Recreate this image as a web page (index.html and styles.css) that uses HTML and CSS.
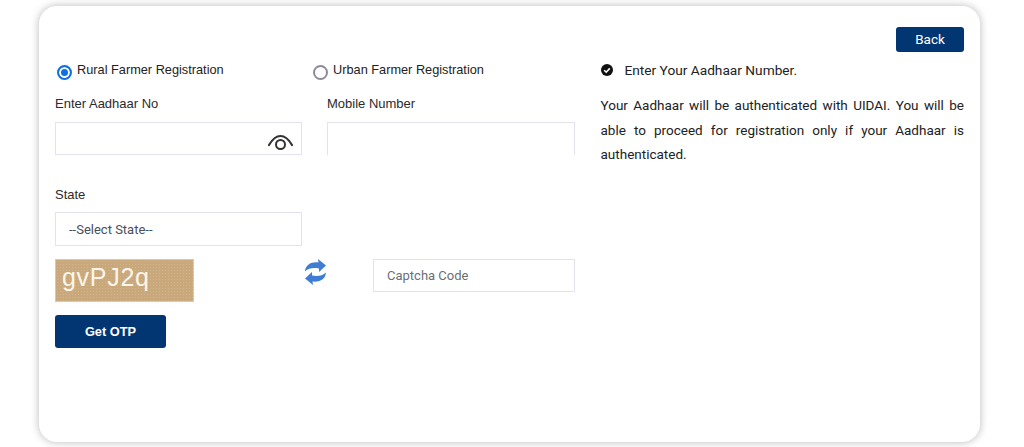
FILE: index.html
```html
<!DOCTYPE html>
<html>
<head>
	<title>Farmer Registration</title>
	<link rel="stylesheet" href="styles.css">
</head>
<body>
	<div class="card">
		<div class="top-bar">
			<a class="btn-back" href="#">Back</a>
		</div>
		<div class="columns">
			<form class="reg-form">
				<div class="radio-row">
					<label class="radio-item radio-rural">
						<span class="radio-dot radio-on"></span>
						<span class="radio-text">Rural Farmer Registration</span>
					</label>
					<label class="radio-item">
						<span class="radio-dot"></span>
						<span class="radio-text">Urban Farmer Registration</span>
					</label>
				</div>
				<div class="field-row">
					<div class="field field-aadhaar">
						<label class="field-label" for="aadhaar">Enter Aadhaar No</label>
						<div class="input-wrap">
							<input class="text-input" type="text" id="aadhaar">
							<svg class="eye-icon" width="26" height="20" viewBox="0 0 26 20">
								<path d="M1 14C4.500 8 8.500 5 12.500 5S20.500 8 24 14" fill="none" stroke="#333" stroke-width="2.200" stroke-linecap="round"/>
								<circle cx="12.500" cy="13.500" r="4.500" fill="none" stroke="#333" stroke-width="2"/>
							</svg>
						</div>
					</div>
					<div class="field field-mobile">
						<label class="field-label" for="mobile">Mobile Number</label>
						<input class="text-input no-bottom" type="text" id="mobile">
					</div>
				</div>
				<div class="field field-state">
					<label class="field-label" for="state">State</label>
					<select class="text-input state-select" id="state">
						<option>--Select State--</option>
					</select>
				</div>
				<div class="captcha-row">
					<div class="captcha-img">gvPJ2q</div>
					<svg class="refresh-icon" width="21" height="26" viewBox="0 0 21 26">
						<path fill="#3f7cd6" d="M0 12.500C0.500 6 6 2.600 13.500 3.500L13 0L21 6.500L14 13L14 9.500C9 8.500 3.500 9 0 12.500Z"/>
						<path fill="#3f7cd6" d="M21 13.500C20.500 20 15 23.400 7.500 22.500L8 26L0 19.500L7 13L7 16.500C12 17.500 17.500 17 21 13.500Z"/>
					</svg>
					<input class="text-input captcha-input" type="text" placeholder="Captcha Code">
				</div>
				<button class="btn-otp" type="button">Get OTP</button>
			</form>
			<div class="info">
				<div class="info-head">
					<svg class="check-icon" width="12" height="12" viewBox="0 0 12 12">
						<circle cx="6" cy="6" r="6" fill="#111"/>
						<path d="M3.200 6.200l2 2 3.600-3.800" fill="none" stroke="#fff" stroke-width="1.600"/>
					</svg>
					<span>Enter Your Aadhaar Number.</span>
				</div>
				<p class="info-text">Your Aadhaar will be authenticated with UIDAI. You will be able to proceed for registration only if your Aadhaar is authenticated.</p>
			</div>
		</div>
	</div>
</body>
</html>
```

FILE: styles.css
```css
html, body {
	height: 100%;
}

body {
	margin: 0;
	background-color: #fff;
	font-family: "Liberation Sans", Arial, sans-serif;
	overflow: hidden;
}

.card {
	box-sizing: border-box;
	width: 941px;
	height: 436px;
	margin: 6px 0 0 39px;
	padding: 21px 16px 0;
	background-color: #fff;
	border-radius: 18px;
	box-shadow: 0px 0px 9px rgba(0, 0, 0, 0.28);
}

.top-bar {
	display: flex;
	justify-content: flex-end;
}

.btn-back {
	width: 68px;
	height: 25px;
	line-height: 25px;
	text-align: center;
	background-color: #023672;
	color: #fff;
	border-radius: 3px;
	font-family: Roboto, sans-serif;
	font-size: 13.500px;
	text-decoration: none;
}

.columns {
	display: grid;
	grid-template-columns: 520px 363.500px;
	column-gap: 25.500px;
}

.radio-row {
	display: flex;
	margin-top: 10px;
	height: 19px;
}

.radio-item {
	display: flex;
	align-items: flex-start;
	font-size: 12.750px;
	color: #222;
}

.radio-rural {
	width: 256px;
}

.radio-dot {
	box-sizing: border-box;
	width: 15px;
	height: 15px;
	margin: 3px 5.500px 0 1.500px;
	border: 2px solid #8f8c99;
	border-radius: 50%;
	background-color: #fff;
}

.radio-on {
	border-color: #0f6fe3;
	background-color: #0f6fe3;
	box-shadow: inset 0 0 0 2px #fff;
}

.radio-text {
	line-height: 15px;
}

.field-row {
	display: flex;
	gap: 25px;
	margin-top: 14px;
}

.field-aadhaar,
.field-state {
	width: 247px;
}

.field-mobile {
	width: 248px;
}

.field-label {
	display: block;
	height: 17px;
	line-height: 17px;
	margin-bottom: 10px;
	font-size: 13px;
	color: #2b2b2b;
}

.input-wrap {
	position: relative;
}

.text-input {
	display: block;
	box-sizing: border-box;
	width: 100%;
	height: 33px;
	padding: 0 13px;
	background-color: #fff;
	border: 1px solid #e2e3ee;
	border-radius: 0;
	outline: none;
	font-family: Roboto, sans-serif;
	font-size: 13px;
	color: #495057;
}

.text-input::placeholder {
	color: #6c6f75;
	opacity: 1;
}

.no-bottom {
	border-bottom: none;
}

.eye-icon {
	position: absolute;
	right: 8px;
	top: 9px;
}

.field-state {
	margin-top: 31px;
}

.field-state .field-label {
	margin-bottom: 9px;
}

.state-select {
	height: 34px;
	appearance: none;
	-webkit-appearance: none;
}

.captcha-row {
	display: flex;
	align-items: flex-start;
	margin-top: 13px;
}

.captcha-img {
	box-sizing: border-box;
	width: 139px;
	height: 43px;
	padding: 0 6px;
	line-height: 34px;
	background-color: #c9a97b;
	background-image: radial-gradient(rgba(255, 255, 255, 0.14) 1px, transparent 1px);
	background-size: 3px 3px;
	border: 1px solid #dcc7a6;
	font-size: 25px;
	letter-spacing: 0.700px;
	color: #faf5ea;
}

.refresh-icon {
	flex: none;
	margin-left: 111px;
	margin-right: 47px;
}

.captcha-input {
	width: 202px;
}

.btn-otp {
	display: block;
	width: 111px;
	height: 33px;
	margin-top: 13px;
	background-color: #023672;
	color: #fff;
	border: none;
	border-radius: 3px;
	font-family: "Liberation Sans", Arial, sans-serif;
	font-size: 12.800px;
	font-weight: bold;
}

.info-head {
	display: flex;
	align-items: center;
	gap: 12px;
	margin-top: 9px;
	height: 17px;
	font-family: Roboto, sans-serif;
	font-size: 13.700px;
	color: #222;
}

.info-text {
	margin: 15px 0 0;
	font-family: Roboto, sans-serif;
	font-size: 13.500px;
	line-height: 24.500px;
	text-align: justify;
	color: #222;
}
```
